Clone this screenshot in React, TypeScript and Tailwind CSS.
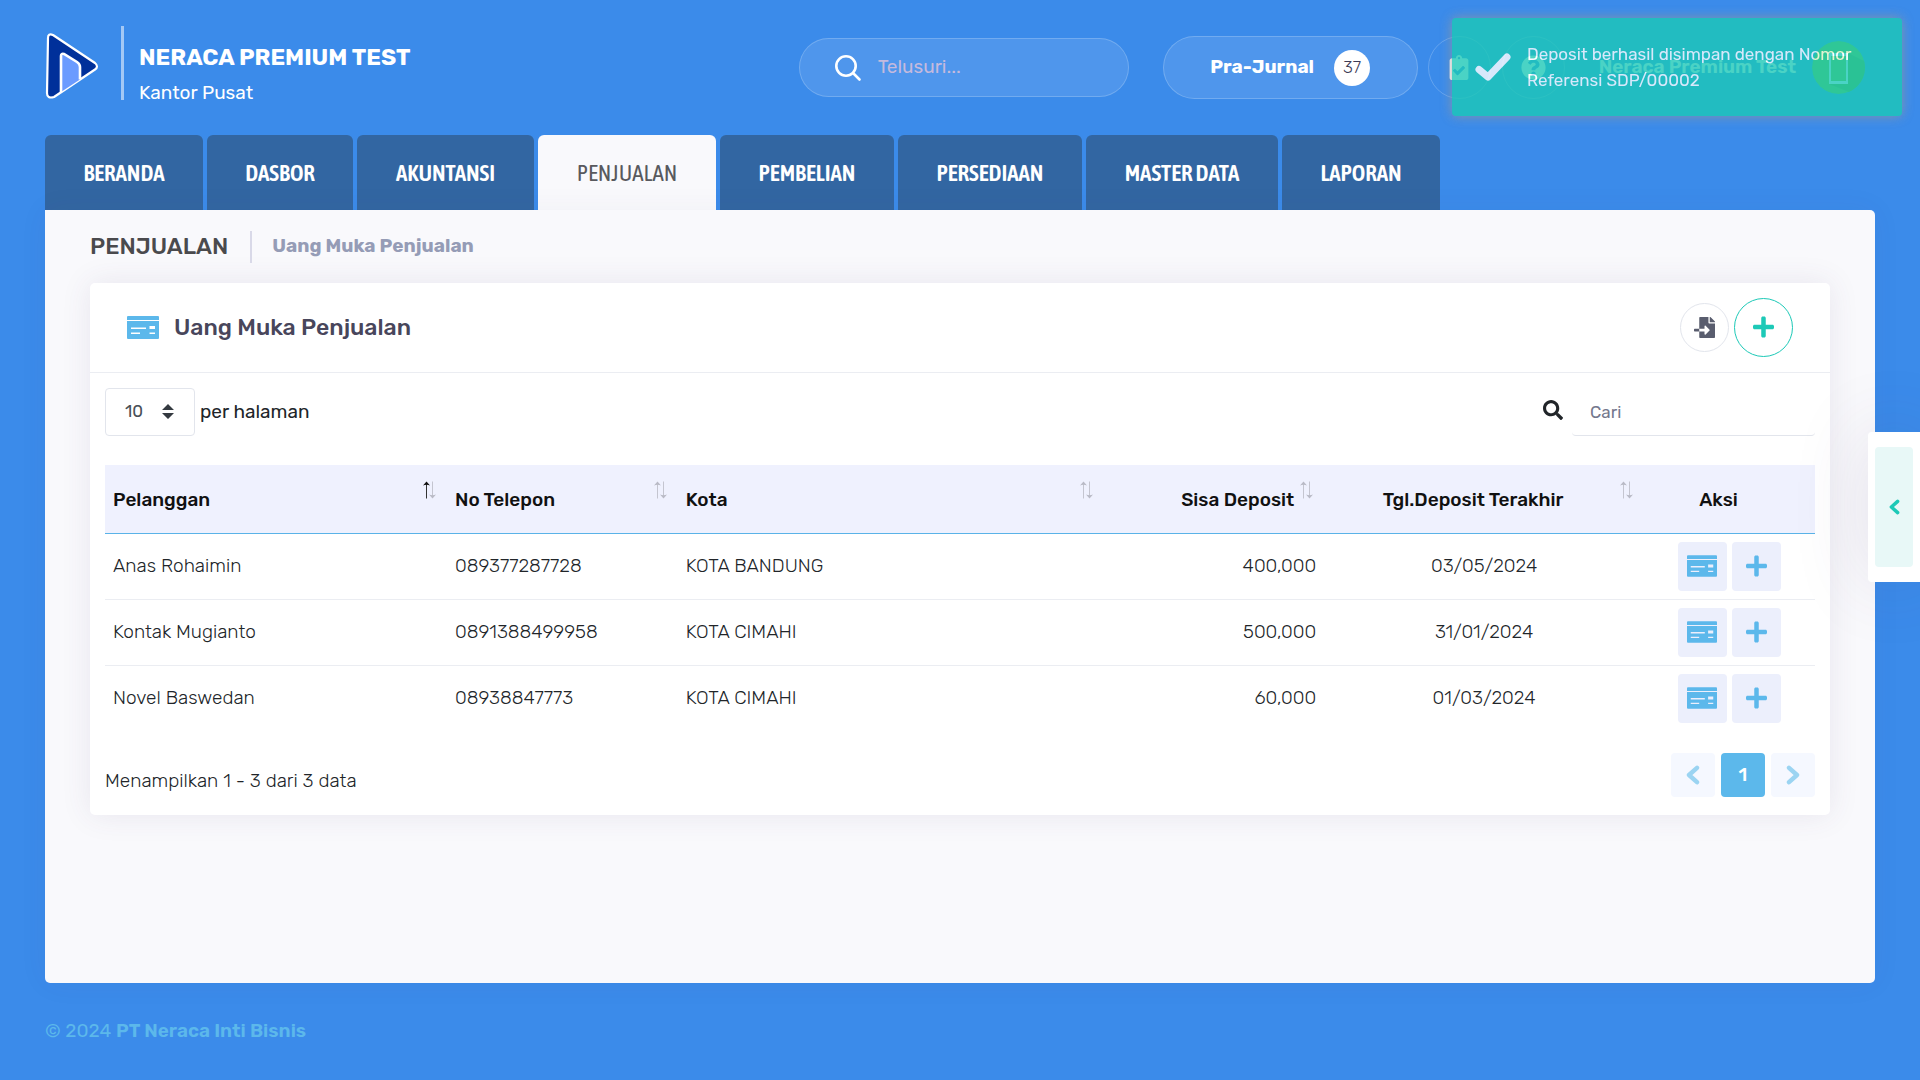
import React, { useState } from 'react';
import { FaClipboardCheck, FaFileImport, FaPlus, FaQuestionCircle, FaSearch } from 'react-icons/fa';

interface Deposit {
  name: string;
  phone: string;
  city: string;
  amount: string;
  date: string;
}

const tabs = [
  { label: 'BERANDA', width: 'w-[158px]' },
  { label: 'DASBOR', width: 'w-[146px]' },
  { label: 'AKUNTANSI', width: 'w-[177px]' },
  { label: 'PENJUALAN', width: 'w-[178px]' },
  { label: 'PEMBELIAN', width: 'w-[174px]' },
  { label: 'PERSEDIAAN', width: 'w-[184px]' },
  { label: 'MASTER DATA', width: 'w-[192px]' },
  { label: 'LAPORAN', width: 'w-[158px]' },
];

const deposits: Deposit[] = [
  { name: 'Anas Rohaimin', phone: '089377287728', city: 'KOTA BANDUNG', amount: '400,000', date: '03/05/2024' },
  { name: 'Kontak Mugianto', phone: '0891388499958', city: 'KOTA CIMAHI', amount: '500,000', date: '31/01/2024' },
  { name: 'Novel Baswedan', phone: '08938847773', city: 'KOTA CIMAHI', amount: '60,000', date: '01/03/2024' },
];

const columns = [
  { label: 'Pelanggan', width: 'w-[20%]', align: 'text-left', sortable: true, sorted: true },
  { label: 'No Telepon', width: 'w-[13.5%]', align: 'text-left', sortable: true, sorted: false },
  { label: 'Kota', width: 'w-[24.9%]', align: 'text-left', sortable: true, sorted: false },
  { label: 'Sisa Deposit', width: 'w-[12.9%]', align: 'text-right', sortable: true, sorted: false },
  { label: 'Tgl.Deposit Terakhir', width: 'w-[18.7%]', align: 'text-center', sortable: true, sorted: false },
  { label: 'Aksi', width: 'w-[10%]', align: 'text-center', sortable: false, sorted: false },
];

const Logo: React.FC = () => (
  <svg width="54" height="68" viewBox="0 0 54 68" className="mt-[6px] shrink-0">
    <path
      d="M3 6 Q3 1 8 3 L50 31 Q54 34.500 50 37.500 L9 65 Q2 67 2 61 Z"
      fill="#00309a"
      stroke="#fff"
      strokeWidth="2.2"
      strokeLinejoin="round"
    />
    <path d="M16 60 V24 Q16 21 19 22 L32 30 Q35 32 35 35 V47.500" fill="#6b9bff" stroke="#fff" strokeWidth="2.6" />
  </svg>
);

const SortIcon: React.FC<{ sorted: boolean }> = ({ sorted }) => (
  <svg width="15" height="18" viewBox="0 0 15 18" className="mb-5 shrink-0" fill="none">
    <path d="M4.500 17.500 V1" stroke={sorted ? '#333' : '#c4c5d0'} />
    <path d="M4.500 0.500 L8 4.500 Q4.500 3 1 4.500 Z" fill={sorted ? '#111' : '#b9bac6'} />
    <path d="M10.500 0.500 V17" stroke="#c4c5d0" />
    <path d="M10.500 17.500 L7 13.500 Q10.500 15 14 13.500 Z" fill="#b9bac6" />
  </svg>
);

const CheckIcon: React.FC<{ className: string }> = ({ className }) => (
  <svg viewBox="0 0 32 23" className={className} fill="#5cb8eb">
    <path d="M1 0 H31 Q32 0 32 1 V4 H0 V1 Q0 0 1 0 Z" />
    <path
      fillRule="evenodd"
      d="M0 5 H32 V22 Q32 23 31 23 H1 Q0 23 0 22 Z M4 11.500 V13 H19 V11.500 Z M4 16.500 V18 H13 V16.500 Z M22.500 10 V13 H28 V10 Z M22.500 16.500 V18 H28 V16.500 Z"
    />
  </svg>
);

const Chevron: React.FC<{ className: string; right?: boolean }> = ({ className, right }) => (
  <svg viewBox="0 0 14 20" className={className} fill="none" stroke="currentColor" strokeWidth="4.4" strokeLinecap="round" strokeLinejoin="round">
    <path d={right ? 'M3 2.800 L11 10 L3 17.200' : 'M11 2.800 L3 10 L11 17.200'} />
  </svg>
);

const Avatar: React.FC = () => (
  <svg width="53" height="53" viewBox="0 0 53 53" className="ml-4 shrink-0">
    <defs>
      <clipPath id="avatar-circle">
        <circle cx="26.500" cy="26.500" r="26.500" />
      </clipPath>
    </defs>
    <g clipPath="url(#avatar-circle)">
      <circle cx="26.500" cy="26.500" r="26.500" fill="#77c01c" />
      <path d="M36 12 L60 24 L60 60 L17 43 L36 43 Z" fill="#62a812" />
    </g>
    <path fillRule="evenodd" fill="#fff" d="M17 12 H36 V43 H17 Z M19 15 V40 H34 V15 Z" />
  </svg>
);

const Header: React.FC = () => (
  <header className="flex h-[135px] items-start justify-between pr-[55px] pl-[45px]">
    <div className="flex items-start pt-[26px]">
      <Logo />
      <div className="ml-[22px] h-[74px] w-[3px] bg-[#a3c8f5]"></div>
      <div className="ml-[15px] pt-[18px] text-white">
        <h1 className="text-[23px] leading-[26px] font-bold">NERACA PREMIUM TEST</h1>
        <p className="mt-[9px] text-[19px] leading-7">Kantor Pusat</p>
      </div>
    </div>

    <div className="flex h-[135px] items-center">
      <label className="flex h-[59px] w-[330px] items-center rounded-full border border-white/20 bg-white/10 pr-6 pl-[34px]">
        <svg width="28" height="28" viewBox="0 0 28 28" fill="none" stroke="#fff" strokeWidth="2.600" strokeLinecap="round" className="shrink-0">
          <circle cx="12" cy="12" r="9.700" />
          <path d="M19.500 19.500 L25.500 25.500" />
        </svg>
        <input
          type="text"
          placeholder="Telusuri..."
          aria-label="Telusuri"
          className="ml-4 w-full min-w-0 bg-transparent text-[19px] text-white outline-none placeholder:text-[#c5badd]"
        />
      </label>
      <button className="ml-[34px] flex h-[63px] w-[255px] items-center justify-center rounded-full border border-white/20 bg-white/10 text-[19px] font-bold text-white">
        Pra-Jurnal
        <span className="ml-5 flex h-9 w-9 items-center justify-center rounded-full bg-white text-[17px] font-light text-[#3d3b56]">
          37
        </span>
      </button>
      <button aria-label="Tugas" className="ml-[10px] flex h-[63px] w-[63px] items-center justify-center rounded-full border border-white/20">
        <FaClipboardCheck className="h-[25px] w-5 text-white" />
      </button>
      <button aria-label="Bantuan" className="ml-[11px] flex h-[63px] w-[63px] items-center justify-center rounded-full border border-white/20">
        <FaQuestionCircle className="h-[25px] w-[25px] text-white" />
      </button>
      <span className="ml-[34px] text-[19px] font-semibold whitespace-nowrap text-white">Neraca Premium Test</span>
      <Avatar />
    </div>
  </header>
);

const Toast: React.FC = () => (
  <div
    role="status"
    className="fixed top-[18px] right-[18px] z-20 flex h-[98px] w-[450px] items-center rounded-[4px] bg-[#1dc9b7] pl-[22px] text-white opacity-80 shadow-[0_0_12px_#999]"
  >
    <svg width="38" height="30" viewBox="0 0 38 30" fill="none" stroke="#fff" strokeWidth="7" strokeLinecap="round" className="shrink-0">
      <path d="M5 17.500 L14 25 L33 5" strokeLinejoin="round" />
    </svg>
    <p className="ml-[15px] text-[17px] leading-[26px]">Deposit berhasil disimpan dengan Nomor Referensi SDP/00002</p>
  </div>
);

const DepositTable: React.FC = () => (
  <table className="mt-[29px] w-full table-fixed border-collapse text-[19px] text-[#212529]">
    <thead>
      <tr className="h-[68px] border-b border-[#5ab3e8] bg-[#eff1fe] text-[#111]">
        {columns.map((col) => (
          <th key={col.label} className={`${col.width} ${col.align} pt-[2px] pr-[10px] pl-2 font-medium`}>
            <div className="flex items-center">
              <span className="flex-1 whitespace-nowrap">{col.label}</span>
              <span className="ml-[5px] w-[15px]">{col.sortable && <SortIcon sorted={col.sorted} />}</span>
            </div>
          </th>
        ))}
      </tr>
    </thead>
    <tbody className="font-light">
      {deposits.map((row) => (
        <tr key={row.name} className="h-[66px] border-b border-[#ebedf2] last:border-b-0">
          <td className="px-2">{row.name}</td>
          <td className="px-2">{row.phone}</td>
          <td className="px-2">{row.city}</td>
          <td className="px-2 text-right">{row.amount}</td>
          <td className="px-2 text-center">{row.date}</td>
          <td>
            <div className="flex justify-center gap-[5px]">
              <button aria-label={`Detail ${row.name}`} className="flex h-[49px] w-[49px] items-center justify-center rounded bg-[#eceffc]">
                <CheckIcon className="h-[22px] w-[30px]" />
              </button>
              <button aria-label={`Tambah ${row.name}`} className="flex h-[49px] w-[49px] items-center justify-center rounded bg-[#eceffc]">
                <FaPlus className="h-6 w-[21px] text-[#5cb8eb]" />
              </button>
            </div>
          </td>
        </tr>
      ))}
    </tbody>
  </table>
);

export default function App() {
  const [activeTab, setActiveTab] = useState('PENJUALAN');
  const [perPage, setPerPage] = useState('10');
  const [search, setSearch] = useState('');

  return (
    <div className="flex min-h-screen flex-col bg-[#3b8bea] font-['Rubik','Roboto',sans-serif]">
      <Header />

      <nav className="flex gap-1 px-[45px]">
        {tabs.map((tab) => (
          <button
            key={tab.label}
            onClick={() => setActiveTab(tab.label)}
            className={`h-[75px] rounded-t-[6px] pt-[2px] font-['Asap_Condensed','Roboto_Condensed',sans-serif] text-[23px] ${tab.width} ${
              activeTab === tab.label ? 'bg-[#f9f9fc] text-[#58595e]' : 'bg-[#3266a2] font-semibold text-white'
            }`}
          >
            {tab.label}
          </button>
        ))}
      </nav>

      <main className="mx-[45px] flex-1 rounded-[5px] rounded-tl-none bg-[#f9f9fc] px-[45px] shadow-[0_0_30px_rgba(82,63,105,0.05)]">
        <div className="flex h-[73px] items-center">
          <h2 className="text-[23px] font-medium text-[#4a4a4d]">PENJUALAN</h2>
          <div className="mr-5 ml-[22px] h-8 w-[2px] bg-[#d9d9e8]"></div>
          <a href="#" className="text-[19px] font-bold text-[#959cb6]">Uang Muka Penjualan</a>
        </div>

        <section className="rounded-[5px] bg-white shadow-[0_0_30px_rgba(82,63,105,0.1)]">
          <div className="flex h-[90px] items-center border-b border-[#ebedf2] px-[37px]">
            <CheckIcon className="h-[23px] w-8" />
            <h3 className="ml-[15px] text-[23px] font-medium text-[#48465b]">Uang Muka Penjualan</h3>
            <div className="ml-auto flex items-center gap-[5px]">
              <button aria-label="Impor" className="flex h-[49px] w-[49px] items-center justify-center rounded-full border border-[#e2e5ec]">
                <FaFileImport className="h-[21px] w-[21px] text-[#595d6e]" />
              </button>
              <button aria-label="Tambah" className="flex h-[59px] w-[59px] items-center justify-center rounded-full border border-[#1dc9b7] pb-[2px]">
                <FaPlus className="h-6 w-[21px] text-[#1dc9b7]" />
              </button>
            </div>
          </div>

          <div className="px-[15px] pt-[15px] pb-[18px]">
            <div className="flex items-center justify-between">
              <label className="flex items-center text-[19px] text-[#212529]">
                <span className="relative">
                  <select
                    value={perPage}
                    onChange={(e) => setPerPage(e.target.value)}
                    className="h-12 w-[90px] appearance-none rounded border border-[#e2e5ec] bg-white px-[19px] text-[17px] text-[#495057] outline-none"
                  >
                    <option>10</option>
                    <option>25</option>
                    <option>50</option>
                  </select>
                  <svg width="12" height="15" viewBox="0 0 4 5" className="pointer-events-none absolute top-4 right-[21px]" fill="#343a40">
                    <path d="M2 0L0 2h4zm0 5L0 3h4z" />
                  </svg>
                </span>
                <span className="ml-[5px]">per halaman</span>
              </label>
              <label className="flex items-center">
                <FaSearch className="mb-1 h-5 w-5 text-[#212529]" />
                <input
                  type="text"
                  placeholder="Cari"
                  aria-label="Cari"
                  value={search}
                  onChange={(e) => setSearch(e.target.value)}
                  className="ml-[9px] h-12 w-[243px] rounded border-b border-[#e2e5ec] px-[18px] text-[17px] outline-none placeholder:text-[#74788d]"
                />
              </label>
            </div>

            <DepositTable />

            <div className="mt-[22px] flex items-start justify-between">
              <p className="pt-[14px] text-[19px] leading-7 font-light text-[#212529]">Menampilkan 1 - 3 dari 3 data</p>
              <div className="flex gap-[6px]">
                <button aria-label="Sebelumnya" className="flex h-11 w-11 items-center justify-center rounded bg-[#f5f8ff] text-[#9bd4f2]">
                  <Chevron className="h-5 w-[14px]" />
                </button>
                <button className="h-11 w-11 rounded bg-[#5cb8eb] text-[19px] font-medium text-white">1</button>
                <button aria-label="Berikutnya" className="flex h-11 w-11 items-center justify-center rounded bg-[#f5f8ff] text-[#9bd4f2]">
                  <Chevron className="h-5 w-[14px]" right />
                </button>
              </div>
            </div>
          </div>
        </section>
      </main>

      <footer className="flex h-[97px] items-center px-[45px] text-[19px] text-[#5cb8eb]">
        <span>
          © 2024 <a href="#" className="font-semibold">PT Neraca Inti Bisnis</a>
        </span>
      </footer>

      <Toast />

      <div className="fixed top-[432px] right-0 z-10 flex h-[150px] w-[52px] items-center rounded-l bg-white pl-[7px] shadow-[0_0_75px_rgba(82,63,105,0.15)]">
        <button aria-label="Buka panel" className="flex h-[120px] w-[38px] items-center justify-center rounded bg-[#e8f8f7] text-[#1dc9b7]">
          <Chevron className="h-4 w-[11px]" />
        </button>
      </div>
    </div>
  );
}
